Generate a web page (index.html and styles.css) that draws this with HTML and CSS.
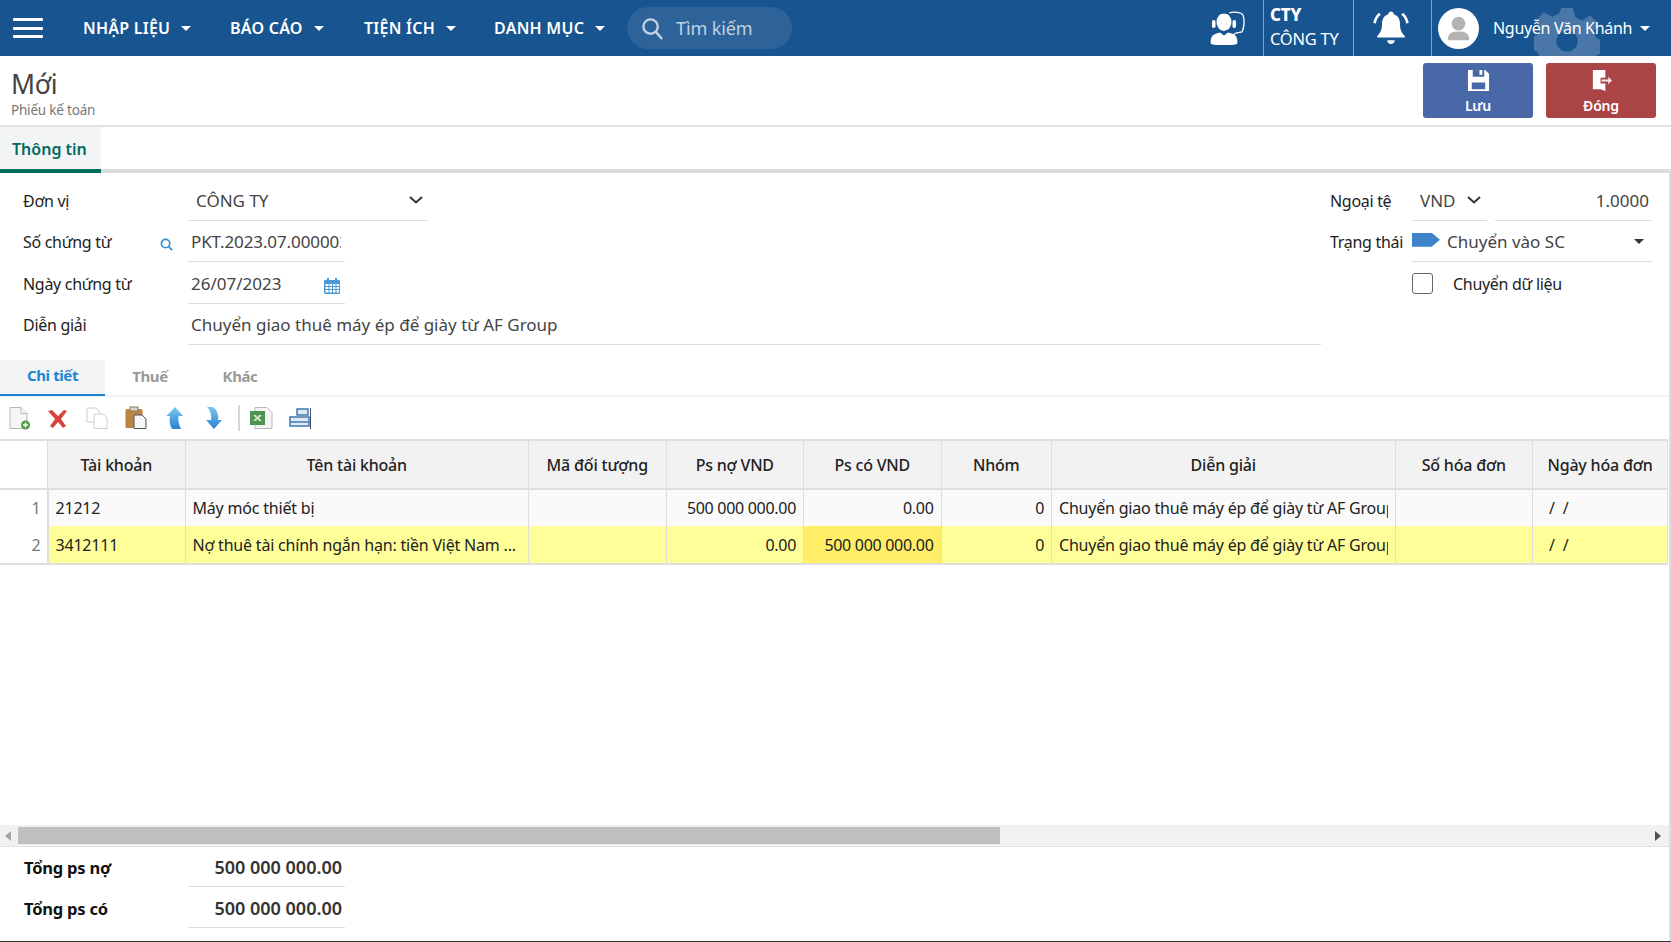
FILE: index.html
```html
<!DOCTYPE html>
<html lang="vi">
<head>
<meta charset="utf-8">
<title>Phiếu kế toán</title>
<link rel="stylesheet" href="styles.css">
</head>
<body>
<div class="app">
  <header class="topbar">
    <svg class="gear" viewBox="0 0 80 80"><path d="M33 0h14l3 11 8 4 10-6 10 10-6 10 4 8 11 3v14l-11 3-4 8 6 10-10 10-10-6-8 4-3 11H33l-3-11-8-4-10 6L2 71l6-10-4-8-11-3V36l11-3 4-8-6-10L12 5l10 6 8-4z M40 27a13 13 0 1 0 .01 0z" fill-rule="evenodd"/></svg>
    <button class="burger"><span></span><span></span><span></span></button>
    <nav class="menu">
      <a class="menu-item">NHẬP LIỆU<i class="caret"></i></a>
      <a class="menu-item">BÁO CÁO<i class="caret"></i></a>
      <a class="menu-item">TIỆN ÍCH<i class="caret"></i></a>
      <a class="menu-item">DANH MỤC<i class="caret"></i></a>
    </nav>
    <div class="search">
      <svg viewBox="0 0 24 24" class="search-ico"><circle cx="10" cy="10" r="7.500"/><path d="M15.500 15.500 22 23"/></svg>
      <span>Tìm kiếm</span>
    </div>
    <div class="top-right">
      <div class="support">
        <svg viewBox="0 0 36 34" class="support-ico">
          <path class="s-line" d="M19 2c5-1.500 12-1 14 2 2 5 1 13-1 17l-6 1-3 2"/>
          <ellipse class="s-fill" cx="14" cy="11" rx="7.500" ry="9"/>
          <path class="s-gap" d="M4 13C3 5 9 2 14 2s11 3 10 11M24 14c0 4-3 6-9 6"/>
          <rect class="s-fill" x="2" y="9" width="3.500" height="8" rx="1.700"/>
          <rect class="s-fill" x="22.500" y="9" width="3.500" height="8" rx="1.700"/>
          <path class="s-fill" d="M1 33c-1-3 0-8 3-9.500 2-1 4-1.500 6-2l4 3 4-3c2 .5 4 1 6 2 3 1.500 4 6.500 3 9.500-2 1-7 1-13 1s-11 0-13-1z"/>
        </svg>
      </div>
      <div class="company"><b>CTY</b><span>CÔNG TY</span></div>
      <div class="bell">
        <svg viewBox="0 0 34 34" class="bell-ico">
          <path class="b-fill" d="M17 1.500c1.500 0 2.500 1 2.500 2.500 4.500 1.500 6 5 6 9.500 0 6 2 8.500 4.500 11v1.500H4V24.500c2.500-2.500 4.500-5 4.500-11 0-4.500 1.500-8 6-9.500 0-1.500 1-2.500 2.500-2.500zM13.500 28.500h7c0 2-1.500 3.500-3.500 3.500s-3.500-1.500-3.500-3.500z"/>
          <path class="b-line" d="M6.500 3.500C3.500 6 2 9 1.500 12.500M27.500 3.500c3 2.500 4.500 5.500 5 9"/>
        </svg>
      </div>
      <div class="user">
        <div class="avatar"><svg viewBox="0 0 42 42"><circle cx="21" cy="16" r="7"/><path d="M10 33c0-8 5-9 11-9s11 1 11 9z"/></svg></div>
        <span class="user-name">Nguyễn Văn Khánh</span><i class="caret"></i>
      </div>
    </div>
  </header>

  <section class="page-head">
    <div class="titles">
      <h1>Mới</h1>
      <p>Phiếu kế toán</p>
    </div>
    <div class="actions">
      <button class="btn btn-save">
        <svg viewBox="0 0 24 24"><path fill-rule="evenodd" d="M1 1h5v7h12V1h1l4 4v18H1zM13 1h3v5h-3zM5 14v7h14v-7z"/></svg>
        <span>Lưu</span>
      </button>
      <button class="btn btn-close">
        <svg viewBox="0 0 24 24"><path d="M3 1h13v8h-5v6h5v8l-5-2-8 0z"/><path d="M12 11h7V8l4 4-4 4v-3h-7z" opacity=".85"/></svg>
        <span>Đóng</span>
      </button>
    </div>
  </section>

  <div class="main-tabs"><a class="main-tab">Thông tin</a></div>

  <div class="content">
  <form class="form">
    <div class="form-left">
      <div class="row">
        <label>Đơn vị</label>
        <div class="field f-unit"><span class="val indent">CÔNG TY</span><svg class="chev" viewBox="0 0 14 8"><path d="M1 1l6 5.500L13 1"/></svg></div>
      </div>
      <div class="row">
        <label>Số chứng từ<svg class="lookup" viewBox="0 0 14 14"><circle cx="6" cy="6" r="4.500"/><path d="M9.500 9.500 13 13"/></svg></label>
        <div class="field f-short"><span class="val clip">PKT.2023.07.000003</span></div>
      </div>
      <div class="row">
        <label>Ngày chứng từ</label>
        <div class="field f-short"><span class="val">26/07/2023</span>
          <svg class="cal" viewBox="0 0 16 17"><path fill-rule="evenodd" d="M1 3h2V1h2v2h6V1h2v2h2a1 1 0 0 1 1 1v12a1 1 0 0 1-1 1H1a1 1 0 0 1-1-1V4a1 1 0 0 1 1-1zM1.500 7v2h3V7zm4 0v2h2.500V7zm3.500 0v2h2.500V7zm3.500 0v2h2.500V7zm-11 3v2h3v-2zm4 0v2h2.500v-2zm3.500 0v2h2.500v-2zm3.500 0v2h2.500v-2zm-11 3v2.500h3V13zm4 0v2.500h2.500V13zm3.500 0v2.500h2.500V13zm3.500 0v2.500h2.500V13z"/></svg>
        </div>
      </div>
      <div class="row">
        <label>Diễn giải</label>
        <div class="field f-long"><span class="val">Chuyển giao thuê máy ép để giày từ AF Group</span></div>
      </div>
    </div>
    <div class="form-right">
      <div class="row">
        <label class="label-r">Ngoại tệ</label>
        <div class="field f-cur"><span class="val indent">VND</span><svg class="chev" viewBox="0 0 14 8"><path d="M1 1l6 5.500L13 1"/></svg></div>
        <div class="field f-rate"><span class="val num">1.0000</span></div>
      </div>
      <div class="row">
        <label class="label-r">Trạng thái</label>
        <div class="field f-status"><i class="tag"></i><span class="val">Chuyển vào SC</span><i class="caret dark"></i></div>
      </div>
      <div class="row">
        <label class="label-r"></label>
        <div class="check"><i class="box"></i><span>Chuyển dữ liệu</span></div>
      </div>
    </div>
  </form>

  <div class="sub-tabs">
    <a class="sub-tab active">Chi tiết</a>
    <a class="sub-tab">Thuế</a>
    <a class="sub-tab">Khác</a>
  </div>

  <div class="toolbar">
    <svg class="tool" viewBox="0 0 24 24"><path class="doc" d="M3 1.500h11l6 6V22.500H3z"/><path class="doc" d="M14 1.500v6h6"/><circle cx="18.500" cy="19" r="4.500" fill="#4f9a45"/><path d="M18.500 16.500v5M16 19h5" stroke="#fff" stroke-width="1.500"/></svg>
    <svg class="tool" viewBox="0 0 24 24"><path d="M2 5l4-1 6 6 6-6 3 1-6 8 5 7-3 2-5-6-5 6-3-2 5-7z" fill="#d5453d"/></svg>
    <svg class="tool" viewBox="0 0 24 24"><path class="doc light" d="M2 2h9l3 3v11H2z"/><path class="doc light" d="M9 8h9l4 4v10.500H9z"/></svg>
    <svg class="tool" viewBox="0 0 24 24"><rect x="1.500" y="3" width="17" height="19" rx="1.500" fill="#b98444"/><rect x="6" y="1" width="8" height="4" fill="#d9d4c9" stroke="#8c7a60"/><path class="doc dark" d="M10 9h8l4 4v9.500H10z"/></svg>
    <svg class="tool" viewBox="0 0 24 24"><defs><linearGradient id="gArrow" x1="0" y1="0" x2="0" y2="1"><stop offset="0" stop-color="#7cc6f2"/><stop offset="1" stop-color="#2a82d0"/></linearGradient></defs><path d="M12 1l8 9h-4.500c-.5 5 .5 9 2.500 13H9C6.500 19 6 14 7 10H3.500z" fill="url(#gArrow)"/></svg>
    <svg class="tool" viewBox="0 0 24 24"><path d="M12 23l8-9h-4c1-5-1-10-5-13H5c3 3 5 8 4 13H4z" fill="url(#gArrow)"/></svg>
    <i class="tool-sep"></i>
    <svg class="tool" viewBox="0 0 24 24"><path class="doc" d="M6 1.500h12l5 5V22.500H6z"/><rect x="1" y="5" width="15" height="14" fill="#4e9350"/><path d="M4 9h3l1.500 2L10 9h3l-3 3 3 3h-3l-1.500-2L7 15H4l3-3z" fill="#cfe6c8"/></svg>
    <svg class="tool" viewBox="0 0 24 24"><path d="M9 3h11v6H9z M2 11h19v9H2z" fill="#dfeaf5" stroke="#3e78b4" stroke-width="1.500"/><path d="M2 16h19" stroke="#3e78b4" stroke-width="1.500"/><path d="M22.500 2v21" stroke="#44505c"/></svg>
  </div>

  <div class="grid-wrap">
    <table class="grid">
      <colgroup>
        <col class="c-idx"><col class="c-a"><col class="c-b"><col class="c-a"><col class="c-a"><col class="c-a"><col class="c-n"><col class="c-b"><col class="c-a"><col>
      </colgroup>
      <thead>
        <tr><th></th><th>Tài khoản</th><th>Tên tài khoản</th><th>Mã đối tượng</th><th>Ps nợ VND</th><th>Ps có VND</th><th>Nhóm</th><th>Diễn giải</th><th>Số hóa đơn</th><th>Ngày hóa đơn</th></tr>
      </thead>
      <tbody>
        <tr>
          <td class="idx">1</td><td>21212</td><td>Máy móc thiết bị</td><td></td><td class="r">500 000 000.00</td><td class="r">0.00</td><td class="r">0</td><td><span class="cell-clip">Chuyển giao thuê máy ép để giày từ AF Group</span></td><td></td><td class="date">/&nbsp;&nbsp;/</td>
        </tr>
        <tr class="hl">
          <td class="idx">2</td><td>3412111</td><td>Nợ thuê tài chính ngắn hạn: tiền Việt Nam ...</td><td></td><td class="r">0.00</td><td class="r hl2">500 000 000.00</td><td class="r">0</td><td><span class="cell-clip">Chuyển giao thuê máy ép để giày từ AF Group</span></td><td></td><td class="date">/&nbsp;&nbsp;/</td>
        </tr>
      </tbody>
    </table>
  </div>

  <div class="hscroll">
    <i class="arrow left"></i>
    <div class="track"><div class="thumb"></div></div>
    <i class="arrow right"></i>
  </div>

  <footer class="totals">
    <div class="total"><label>Tổng ps nợ</label><div class="total-val">500 000 000.00</div></div>
    <div class="total"><label>Tổng ps có</label><div class="total-val">500 000 000.00</div></div>
  </footer>
  </div>
</div>
</body>
</html>
```
FILE: styles.css
```css
* { box-sizing: border-box; }
html, body { margin: 0; padding: 0; height: 100%; background: #fff; }
body { font-family: "Noto Sans", "Open Sans", sans-serif; color: #333; font-size: 16px; overflow: hidden; }
.app { width: 1671px; height: 942px; display: flex; flex-direction: column; border-bottom: 1px solid #333; }

.topbar { height: 56px; flex: none; background: #18548f; display: flex; align-items: center; position: relative; overflow: hidden; color: #fff; }
.gear { position: absolute; left: 1534px; top: 8px; width: 66px; height: 66px; fill: #4a77a8; }
.burger { width: 30px; height: 20px; margin-left: 13px; padding: 0; border: 0; background: none; display: flex; flex-direction: column; justify-content: space-between; }
.burger span { display: block; height: 3px; background: #fff; border-radius: 1px; }
.menu { display: flex; margin-left: 40px; }
.menu-item { display: flex; align-items: center; font-weight: 600; font-size: 16px; letter-spacing: .25px; width: 147px; white-space: nowrap; }
.menu-item:nth-child(2) { width: 134px; }
.menu-item:nth-child(3) { width: 130px; }
.menu-item:nth-child(4) { width: 134px; }
.caret { display: inline-block; width: 0; height: 0; border: 5px solid transparent; border-top: 5px solid #fff; border-bottom: 0; margin-left: 11px; }
.caret.dark { border-top-color: #333; margin-left: auto; margin-right: 8px; }
.search { width: 165px; height: 42px; margin-left: -1px; border-radius: 21px; background: #2d6399; display: flex; align-items: center; padding-left: 14px; color: #c0d2e4; font-size: 18px; letter-spacing: -.1px; }
.search-ico { width: 23px; height: 25px; fill: none; stroke: #c0d2e4; stroke-width: 2.500; margin-right: 12px; }
.top-right { margin-left: auto; display: flex; align-items: stretch; height: 56px; position: relative; }
.support { width: 60px; display: flex; align-items: center; }
.support-ico { width: 36px; height: 34px; margin-left: 7px; }
.s-line { fill: none; stroke: #fff; stroke-width: 1.300; }
.s-gap { fill: none; stroke: #18548f; stroke-width: 1.200; }
.s-fill { fill: #fff; }
.company { width: 90px; border-left: 1px solid #7fa2c5; padding: 4px 0 0 6px; display: flex; flex-direction: column; font-size: 16.500px; line-height: 25px; letter-spacing: -.25px; }
.company b { font-weight: 800; font-size: 17px; line-height: 22px; }
.bell { width: 78px; border-left: 1px solid #7fa2c5; display: flex; align-items: center; justify-content: center; padding-right: 4px; }
.bell-ico { width: 36px; height: 36px; }
.b-fill { fill: #fff; }
.b-line { fill: none; stroke: #fff; stroke-width: 2.500; }
.user { width: 240px; border-left: 1px solid #7fa2c5; display: flex; align-items: center; padding-left: 6px; }
.avatar { width: 41px; height: 41px; border-radius: 50%; background: #fff; overflow: hidden; }
.avatar svg { width: 41px; height: 41px; fill: #b3b3b3; display: block; }
.user-name { margin-left: 14px; font-size: 16px; letter-spacing: -.3px; white-space: nowrap; }
.user .caret { margin-left: 8px; }

.page-head { height: 71px; flex: none; display: flex; justify-content: space-between; border-bottom: 2px solid #e2e2e2; }
.titles { padding: 13px 0 0 11px; }
.titles h1 { margin: 0; font-weight: 400; font-size: 26.500px; line-height: 30px; color: #444; letter-spacing: -.3px; }
.titles p { margin: 2px 0 0; font-size: 13.500px; line-height: 18px; color: #777; letter-spacing: -.2px; }
.actions { display: flex; gap: 13px; padding: 7px 15px 0 0; }
.btn { width: 110px; height: 55px; border: 0; border-radius: 3px; color: #fff; display: flex; flex-direction: column; align-items: center; padding: 6px 0 0; font: 600 14px "Noto Sans", sans-serif; letter-spacing: -.2px; }
.btn svg { width: 23px; height: 23px; fill: #fff; margin-bottom: 4px; }
.btn-save { background: #4868a8; }
.btn-close { background: #ab4444; }

.main-tabs { height: 46px; flex: none; border-bottom: 4px solid #dcdcdc; display: flex; }
.main-tab { width: 101px; height: 46px; flex: none; padding: 11px 0 0 12px; background: #f3f4f5; border-bottom: 4px solid #006b5f; color: #006b5f; font-weight: 600; font-size: 16px; }

.content { flex: 1; min-height: 0; display: flex; flex-direction: column; border-right: 2px solid #dedede; }

.form { flex: none; height: 187px; display: flex; justify-content: space-between; padding-top: 6px; }
.form-left { width: 1321px; padding-left: 23px; }
.form-right { width: 322px; margin-right: 17px; }
.row { height: 41.500px; display: flex; align-items: stretch; }
label { width: 165px; flex: none; display: flex; align-items: center; position: relative; color: #222; font-size: 16px; letter-spacing: -.3px; padding-top: 2px; }
.lookup { position: absolute; left: 137px; top: 17px; width: 13px; height: 13px; fill: none; stroke: #2f8fd0; stroke-width: 1.800; }
.field { display: flex; align-items: center; border-bottom: 1px solid #dcdcdc; height: 41.500px; color: #444; font-size: 17px; padding-top: 2px; position: relative; white-space: nowrap; }
.val { display: block; padding-left: 3px; }
.val.indent { padding-left: 8px; }
.f-unit { width: 240px; justify-content: space-between; padding-right: 5px; }
.chev { width: 14px; height: 8px; fill: none; stroke: #333; stroke-width: 2; }
.f-short { width: 157px; }
.clip { width: 153px; overflow: hidden; letter-spacing: -.1px; }
.cal { position: absolute; left: 136px; top: 15px; width: 16px; height: 17px; fill: #4a9ad8; }
.f-long { width: 1133px; }
.label-r { width: 82px; }
.f-cur { width: 75px; justify-content: space-between; padding-right: 6px; }
.f-rate { width: 157px; margin-left: 8px; justify-content: flex-end; padding-right: 3px; }
.val.num { padding: 0; }
.f-status { width: 240px; }
.tag { width: 28px; height: 14px; flex: none; background: #3d84c9; clip-path: polygon(0 0, 70% 0, 100% 50%, 70% 100%, 0 100%); margin: 0 4px 4px 0; }
.check { display: flex; align-items: center; font-size: 16px; color: #222; letter-spacing: -.3px; padding-top: 2px; }
.box { width: 21px; height: 21px; border: 1px solid #666; border-radius: 3px; margin-right: 20px; }

.sub-tabs { flex: none; height: 37px; display: flex; border-bottom: 2px solid #f1f1f1; }
.sub-tab { width: 105px; height: 36px; display: flex; align-items: center; justify-content: center; font-weight: 700; font-size: 15px; color: #999; letter-spacing: -.4px; padding-bottom: 5px; }
.sub-tab:nth-child(2) { width: 90px; }
.sub-tab:nth-child(3) { width: 90px; }
.sub-tab.active { background: #f3f4f5; color: #1b86d1; border-bottom: 2px solid #1b86d1; }

.toolbar { flex: none; height: 42px; display: flex; align-items: center; padding-left: 7px; gap: 15px; }
.tool { width: 24px; height: 24px; flex: none; }
.doc { fill: #f6f6f6; stroke: #b8b8b8; }
.doc.light { fill: #fff; stroke: #cfcfcf; }
.doc.dark { stroke: #555; }
.tool-sep { width: 2px; height: 26px; background: #d6d6d6; margin: 0 -6px 0 -3px; }

.grid-wrap { flex: 1; min-height: 0; }
.grid { width: 1668px; table-layout: fixed; border-collapse: collapse; font-size: 16px; letter-spacing: -.2px; color: #222; }
.c-idx { width: 47.500px; }
.c-a { width: 137.500px; }
.c-b { width: 343.500px; }
.c-n { width: 110.500px; }
.grid th { height: 49px; background: #f2f2f2; font-weight: 500; font-size: 16px; border: 1px solid #dedede; border-top-width: 2px; border-bottom-width: 2px; border-left: 0; }
.grid th:first-child { background: #fff; }
.grid td { height: 37px; padding: 0 7px; background: #fafafa; border-right: 1px solid #dedede; white-space: nowrap; overflow: hidden; }
.grid tr.hl td { background: #ffff99; height: 38px; border-bottom: 2px solid #dedede; }
.grid td.idx { background: #fff; text-align: right; color: #777; padding-right: 6px; border-right-width: 2px; }
.grid tr.hl td.idx { background: #fff; }
.grid td.r { text-align: right; letter-spacing: -.3px; }
.grid tr.hl td.hl2 { background: #ffee66; }
.grid td.date { padding-left: 16px; }
.cell-clip { display: block; overflow: hidden; }

.hscroll { flex: none; height: 22px; background: #f1f1f1; border-bottom: 1px solid #e0e0e0; display: flex; align-items: center; padding: 0 8px 0 5px; }
.track { flex: 1; height: 17px; margin: 0 7px; }
.thumb { width: 982px; height: 17px; background: #bfbfbf; }
.arrow { width: 0; height: 0; border: 5px solid transparent; }
.arrow.left { border-left: 0; border-right: 6px solid #a3a3a3; }
.arrow.right { border-right: 0; border-left: 6px solid #505050; }

.totals { flex: none; height: 94px; padding-left: 24px; }
.total { height: 40px; display: flex; align-items: stretch; }
.total + .total { height: 41px; }
.total label { width: 164px; font-weight: 700; color: #111; font-size: 16.500px; letter-spacing: -.2px; align-items: flex-end; padding: 0 0 7px; line-height: 24px; }
.total-val { width: 157px; border-bottom: 1px solid #dcdcdc; display: flex; justify-content: flex-end; align-items: flex-end; font-weight: 600; font-size: 18px; line-height: 24px; color: #333; padding: 0 3px 7px 0; white-space: nowrap; }
```
